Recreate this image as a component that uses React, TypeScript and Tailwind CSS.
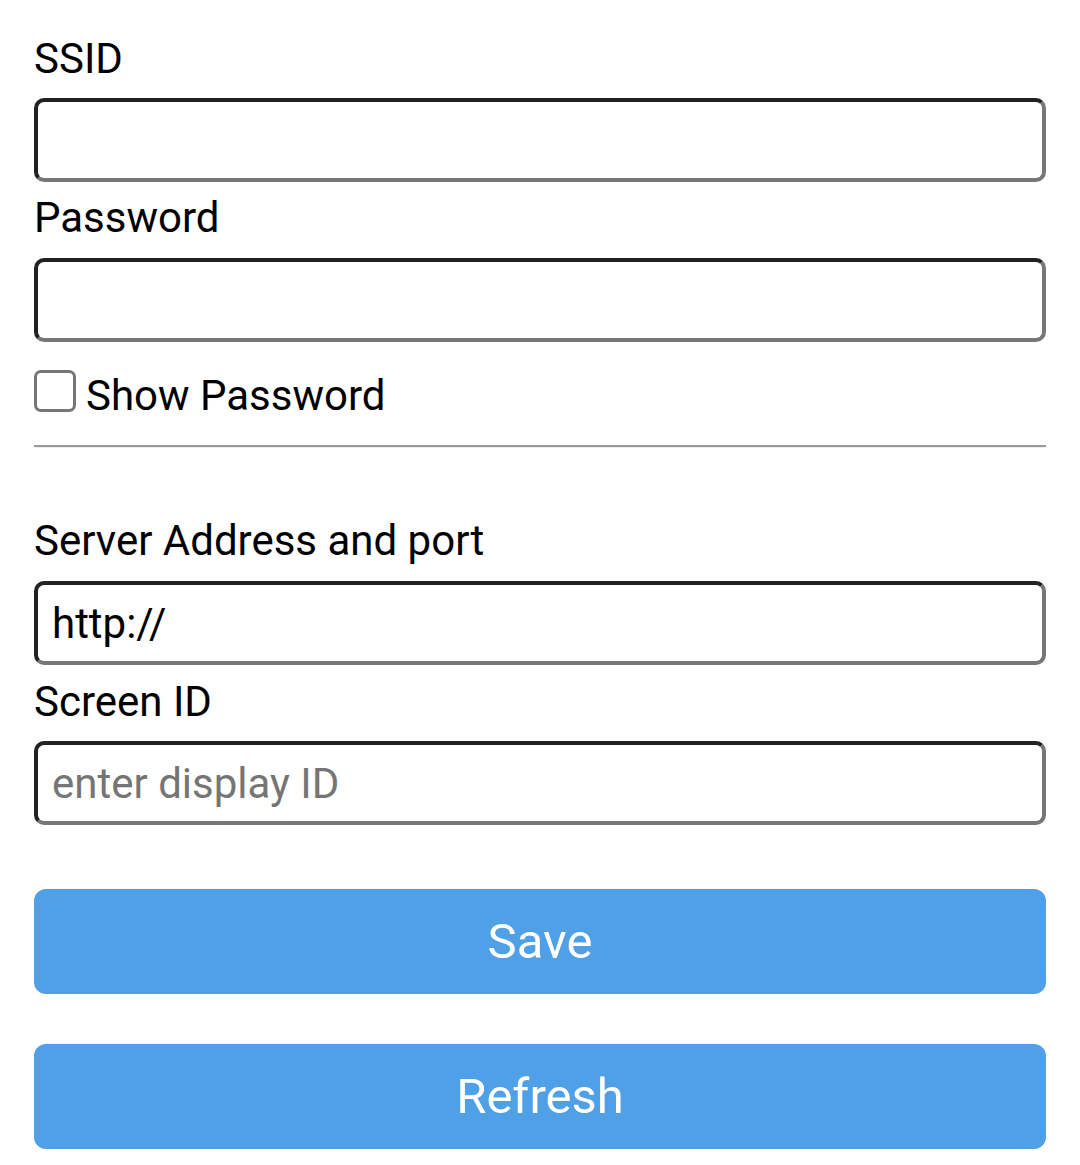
import { useState } from "react";

const inputCls =
  "block w-full h-[84px] rounded-[10px] border-4 border-t-[#222222] border-l-[#222222] border-b-[#777777] border-r-[#777777] bg-white px-[14px] text-[42px] text-black placeholder:text-[#757575] outline-none";

export default function App() {
  const [show, setShow] = useState(false);

  return (
    <div className="min-h-screen bg-white px-[34px] pt-[35px] font-['Roboto',sans-serif] text-black">
      <label className="block text-[42px] leading-[48px] mb-[15px]">SSID</label>
      <input type="text" className={inputCls} />

      <label className="block text-[42px] leading-[48px] mt-[12px] mb-[16px]">Password</label>
      <input type={show ? "text" : "password"} className={inputCls} />

      <div className="flex items-start h-[42px] mt-[28px]">
        <button
          type="button"
          onClick={() => setShow(!show)}
          className="w-[42px] h-[42px] rounded-[7px] border-[3px] border-[#767676] bg-white shrink-0"
        />
        <span className="ml-[10px] mt-[2px] text-[42px] leading-[48px]">Show Password</span>
      </div>

      <hr className="mt-[33px] border-0 border-t-2 border-t-[#9a9a9a] border-b border-b-[#eeeeee]" />

      <label className="block text-[42px] leading-[48px] mt-[69px] mb-[16px]">Server Address and port</label>
      <input type="text" defaultValue="http://" className={inputCls} />

      <label className="block text-[42px] leading-[48px] mt-[13px] mb-[15px]">Screen ID</label>
      <input type="text" placeholder="enter display ID" className={inputCls} />

      <button
        type="button"
        className="block w-full h-[105px] mt-[64px] rounded-[12px] bg-[#4fa0e6] text-white text-[49px]"
      >
        Save
      </button>
      <button
        type="button"
        className="block w-full h-[105px] mt-[50px] rounded-[12px] bg-[#4fa0e6] text-white text-[49px]"
      >
        Refresh
      </button>
    </div>
  );
}
